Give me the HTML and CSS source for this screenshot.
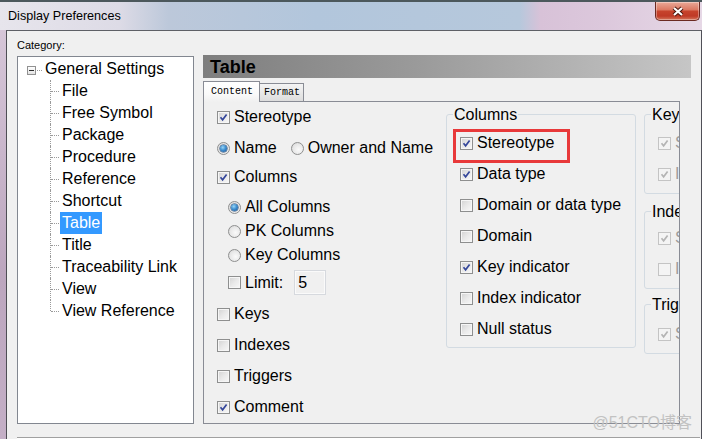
FILE: index.html
```html
<!DOCTYPE html>
<html>
<head>
<meta charset="utf-8">
<title>Display Preferences</title>
<link rel="stylesheet" href="styles.css">
</head>
<body>
<div class="titlebar">
  <span class="title">Display Preferences</span>
  <div class="close">
    <svg width="14" height="11" viewBox="0 0 14 11"><path class="x-out" d="M3 2 L11 9 M11 2 L3 9"/><path class="x-in" d="M3 2 L11 9 M11 2 L3 9"/></svg>
  </div>
</div>
<div class="body-row">
  <div class="frame-left"></div>
  <div class="window">
    <div class="cat-label">Category:</div>
    <div class="main">
      <div class="tree">
        <div class="tree-root"><span class="expander"></span><span class="root-dots"></span><span class="tree-text">General Settings</span></div>
        <div class="tree-children">
          <div class="tree-item"><span class="tree-text">File</span></div>
          <div class="tree-item"><span class="tree-text">Free Symbol</span></div>
          <div class="tree-item"><span class="tree-text">Package</span></div>
          <div class="tree-item"><span class="tree-text">Procedure</span></div>
          <div class="tree-item"><span class="tree-text">Reference</span></div>
          <div class="tree-item"><span class="tree-text">Shortcut</span></div>
          <div class="tree-item"><span class="tree-text selected">Table</span></div>
          <div class="tree-item"><span class="tree-text">Title</span></div>
          <div class="tree-item"><span class="tree-text">Traceability Link</span></div>
          <div class="tree-item"><span class="tree-text">View</span></div>
          <div class="tree-item last"><span class="tree-text">View Reference</span></div>
        </div>
      </div>
      <div class="right">
        <div class="header">Table</div>
        <div class="tabs">
          <div class="tab active">Content</div>
          <div class="tab format">Format</div>
        </div>
        <div class="panel">
          <div class="col-left">
            <div class="row"><span class="cb checked"><svg viewBox="0 0 9 9"><path d="M1.5 4.3 L3.6 6.8 L7.6 1.6"/></svg></span>Stereotype</div>
            <div class="row m9"><span class="rb on"></span>Name<span class="rb opt"></span>Owner and Name</div>
            <div class="row m7"><span class="cb checked"><svg viewBox="0 0 9 9"><path d="M1.5 4.3 L3.6 6.8 L7.6 1.6"/></svg></span>Columns</div>
            <div class="row sub m8"><span class="rb on"></span>All Columns</div>
            <div class="row sub m2"><span class="rb"></span>PK Columns</div>
            <div class="row sub m2"><span class="rb"></span>Key Columns</div>
            <div class="row sub limit m4"><span class="cb"></span>Limit:<span class="limit-input">5</span></div>
            <div class="row m8"><span class="cb"></span>Keys</div>
            <div class="row m9"><span class="cb"></span>Indexes</div>
            <div class="row m9"><span class="cb"></span>Triggers</div>
            <div class="row m9"><span class="cb checked"><svg viewBox="0 0 9 9"><path d="M1.5 4.3 L3.6 6.8 L7.6 1.6"/></svg></span>Comment</div>
          </div>
          <fieldset class="group columns">
            <legend>Columns</legend>
            <div class="row gi marked"><span class="cb checked"><svg viewBox="0 0 9 9"><path d="M1.5 4.3 L3.6 6.8 L7.6 1.6"/></svg></span>Stereotype<span class="mark-box"></span></div>
            <div class="row gi m9"><span class="cb checked"><svg viewBox="0 0 9 9"><path d="M1.5 4.3 L3.6 6.8 L7.6 1.6"/></svg></span>Data type</div>
            <div class="row gi m9"><span class="cb"></span>Domain or data type</div>
            <div class="row gi m9"><span class="cb"></span>Domain</div>
            <div class="row gi m9"><span class="cb checked"><svg viewBox="0 0 9 9"><path d="M1.5 4.3 L3.6 6.8 L7.6 1.6"/></svg></span>Key indicator</div>
            <div class="row gi m9"><span class="cb"></span>Index indicator</div>
            <div class="row gi m9"><span class="cb"></span>Null status</div>
          </fieldset>
          <div class="col-right">
            <fieldset class="group side keys">
              <legend>Keys</legend>
              <div class="row gi dis"><span class="cb checked"><svg viewBox="0 0 9 9"><path d="M1.5 4.3 L3.6 6.8 L7.6 1.6"/></svg></span>S</div>
              <div class="row gi dis m9"><span class="cb checked"><svg viewBox="0 0 9 9"><path d="M1.5 4.3 L3.6 6.8 L7.6 1.6"/></svg></span>I</div>
            </fieldset>
            <fieldset class="group side indexes">
              <legend>Inde</legend>
              <div class="row gi dis"><span class="cb checked"><svg viewBox="0 0 9 9"><path d="M1.5 4.3 L3.6 6.8 L7.6 1.6"/></svg></span>S</div>
              <div class="row gi dis m9"><span class="cb"></span>I</div>
            </fieldset>
            <fieldset class="group side triggers">
              <legend>Trig</legend>
              <div class="row gi dis"><span class="cb checked"><svg viewBox="0 0 9 9"><path d="M1.5 4.3 L3.6 6.8 L7.6 1.6"/></svg></span>S</div>
            </fieldset>
          </div>
        </div>
      </div>
    </div>
    <div class="separator"></div>
  </div>
</div>
<div class="watermark">@51CTO博客</div>
</body>
</html>
```

FILE: styles.css
```css
* { box-sizing: border-box; }
html, body { margin: 0; padding: 0; }
body {
  width: 702px;
  height: 439px;
  overflow: hidden;
  position: relative;
  font-family: "Liberation Sans", Arial, sans-serif;
  color: #000;
  background: #c6b2c8;
}

/* title bar */
.titlebar {
  height: 30px;
  display: flex;
  align-items: flex-start;
  border-top: 2px solid #4c585c;
  background: linear-gradient(to right, #e7e5ec 0%, #dddbe6 17%, #bcc8da 24%, #b2c6dc 45%, #b6c8dc 74%, #d8c2d8 77%, #dcc8dc 86%, #e6d8e6 100%);
}
.title {
  font-size: 12.6px;
  line-height: 16px;
  padding: 6px 0 0 8px;
}
.close {
  margin-left: auto;
  margin-right: 2px;
  width: 45px;
  height: 19px;
  border: 1px solid #6b2a22;
  border-top: none;
  border-radius: 0 0 5px 5px;
  background: linear-gradient(#eaa998 0%, #dc7a64 42%, #c6432c 52%, #bf3a26 78%, #d5775c 100%);
  box-shadow: inset 0 0 0 1px rgba(255, 255, 255, 0.35);
  display: flex;
  align-items: center;
  justify-content: center;
}
.close svg { display: block; }
.x-out { stroke: #4a160c; stroke-width: 4.2; fill: none; }
.x-in { stroke: #ffffff; stroke-width: 2.2; fill: none; }

/* window */
.body-row { display: flex; height: 409px; }
.frame-left {
  width: 6px;
  flex: none;
  background: linear-gradient(#d6c6d8, #bca6be 60%, #c4afc6);
}
.window {
  width: 696px;
  flex: none;
  background: #f0f0f0;
  border-left: 1px solid #4e4e54;
  border-top: 1px solid #5e6066;
  border-right: 1px solid #505058;
  padding: 8px 10px 0 10px;
}
.cat-label {
  font-size: 11px;
  line-height: 13px;
  height: 16px;
}
.main { display: flex; height: 369px; }

/* tree */
.tree {
  width: 177px;
  height: 368px;
  margin-top: 1px;
  padding-top: 1px;
  flex: none;
  border: 1px solid #828790;
  background: #fff;
  font-size: 16px;
}
.tree-root {
  display: flex;
  align-items: center;
  height: 22px;
  padding-left: 9px;
}
.expander {
  position: relative;
  width: 9px;
  height: 9px;
  margin-top: 3px;
  border: 1px solid #919191;
  background: linear-gradient(#ffffff, #e2e2e2);
  flex: none;
}
.expander::after {
  content: "";
  position: absolute;
  left: 1px;
  top: 3px;
  width: 5px;
  height: 1px;
  background: #2c2c2c;
}
.root-dots {
  width: 5px;
  margin: 3px 1px 0 1px;
  border-top: 1px dotted #9a9a9a;
}
.tree-children { margin-left: 32px; }
.tree-item {
  position: relative;
  height: 22px;
  padding-left: 10px;
  display: flex;
  align-items: center;
}
.tree-item::before {
  content: "";
  position: absolute;
  left: 0;
  top: 0;
  bottom: 0;
  border-left: 1px dotted #9a9a9a;
}
.tree-item.last::before { bottom: 11px; }
.tree-item::after {
  content: "";
  position: absolute;
  left: 1px;
  top: 11px;
  width: 8px;
  border-top: 1px dotted #9a9a9a;
}
.tree-text {
  padding: 0 2px;
  line-height: 22px;
  white-space: nowrap;
}
.tree-text.selected { background: #3399ff; color: #fff; }

/* right side */
.right { width: 488px; margin-left: 9px; flex: none; }
.header {
  height: 23px;
  padding-left: 7px;
  font-size: 18px;
  font-weight: bold;
  line-height: 24px;
  background: linear-gradient(to right, #7e7e7e 0%, #9b9b9b 45%, #c6c6c6 100%);
}
.tabs {
  display: flex;
  align-items: flex-end;
  height: 20px;
  margin-top: 3px;
}
.tab {
  font-family: "Liberation Mono", "Courier New", monospace;
  font-size: 10px;
  line-height: 12px;
  border: 1px solid #898c95;
  border-bottom: none;
  white-space: nowrap;
}
.tab.active {
  position: relative;
  z-index: 1;
  width: 57px;
  height: 21px;
  margin-bottom: -1px;
  padding: 4px 0 0 7px;
  background: linear-gradient(#ffffff, #fafafa 60%, #f0f0f0);
}
.tab.format {
  width: 44px;
  height: 18px;
  border-left: none;
  padding: 3px 0 0 4px;
  background: linear-gradient(#f4f4f4, #dddddd);
}
.panel {
  width: 477px;
  height: 323px;
  border: 1px solid #898c95;
  background: #f0f0f0;
  display: flex;
  align-items: flex-start;
  overflow: hidden;
  font-size: 16px;
}
.col-left {
  width: 242px;
  flex: none;
  padding: 4px 0 0 13px;
}
.row {
  display: flex;
  align-items: center;
  height: 22px;
  white-space: nowrap;
}
.row.m2 { margin-top: 2px; }
.row.m4 { margin-top: 4px; }
.row.m7 { margin-top: 7px; }
.row.m8 { margin-top: 8px; }
.row.m9 { margin-top: 9px; }
.row.sub { margin-left: 11px; }
.row.limit { height: 25px; }

/* checkbox */
.cb {
  width: 13px;
  height: 13px;
  flex: none;
  margin-right: 4px;
  border: 1px solid #8e8f8f;
  background: linear-gradient(135deg, #d2d2d2 0%, #e9e9e9 50%, #f8f8f8 100%);
  box-shadow: inset 0 0 0 1px #f6f6f6;
  display: flex;
  align-items: center;
  justify-content: center;
}
.cb svg { width: 9px; height: 9px; display: block; }
.cb svg path { fill: none; stroke: #34469a; stroke-width: 1.7; }
.dis { color: #9c9c9c; }
.dis .cb { border-color: #c4c4c4; background: #f4f4f4; box-shadow: none; }
.dis .cb svg path { stroke: #b4b4b4; }

/* radio */
.rb {
  width: 13px;
  height: 13px;
  flex: none;
  margin-right: 4px;
  border: 1px solid #8e8f8f;
  border-radius: 50%;
  background: radial-gradient(circle at 60% 60%, #fafafa 0%, #e8e8e8 55%, #d2d2d2 100%);
  display: flex;
  align-items: center;
  justify-content: center;
}
.rb.on::after {
  content: "";
  width: 7px;
  height: 7px;
  border-radius: 50%;
  background: radial-gradient(circle at 40% 35%, #9ad6f6 0%, #3f8fd0 45%, #1a4f8c 100%);
  box-shadow: 0 0 0 0.5px #1c3f6a;
}
.rb.opt { margin-left: 14px; }

.limit-input {
  width: 32px;
  height: 25px;
  margin-left: 11px;
  border: 1px solid #d6d9de;
  background: #f0f0f0;
  box-shadow: inset 0 0 0 1px #fafafa;
  padding-left: 3px;
  line-height: 23px;
}

/* group boxes */
.group {
  margin: 0;
  padding: 0;
  min-width: 0;
  border: 1px solid #d3dbe2;
  border-radius: 3px;
}
.group legend {
  margin-left: 6px;
  padding: 0 1px;
  font-size: 16px;
  line-height: 19px;
}
.group .gi { margin-left: 13px; }
.columns {
  width: 190px;
  flex: none;
  margin-top: 3px;
  padding-top: 8px;
  padding-bottom: 7px;
}
.marked { position: relative; }
.mark-box {
  position: absolute;
  left: -7px;
  top: -3px;
  width: 117px;
  height: 34px;
  border: 3px solid #e8393a;
}
.col-right {
  width: 120px;
  flex: none;
  margin-left: 8px;
}
.side { width: 110px; padding-bottom: 8px; }
.keys { margin-top: 3px; padding-top: 8px; }
.indexes { margin-top: 8px; padding-top: 6px; }
.triggers { margin-top: 6px; padding-top: 9px; }

.separator {
  margin-top: 13px;
  margin-right: -9px;
  border-top: 1px solid #a0a0a0;
  border-bottom: 1px solid #ffffff;
}

.watermark {
  position: absolute;
  right: 10px;
  bottom: 6px;
  font-family: "Liberation Sans", "Noto Sans CJK SC", sans-serif;
  font-size: 16px;
  color: #c2c2c2;
}
```
